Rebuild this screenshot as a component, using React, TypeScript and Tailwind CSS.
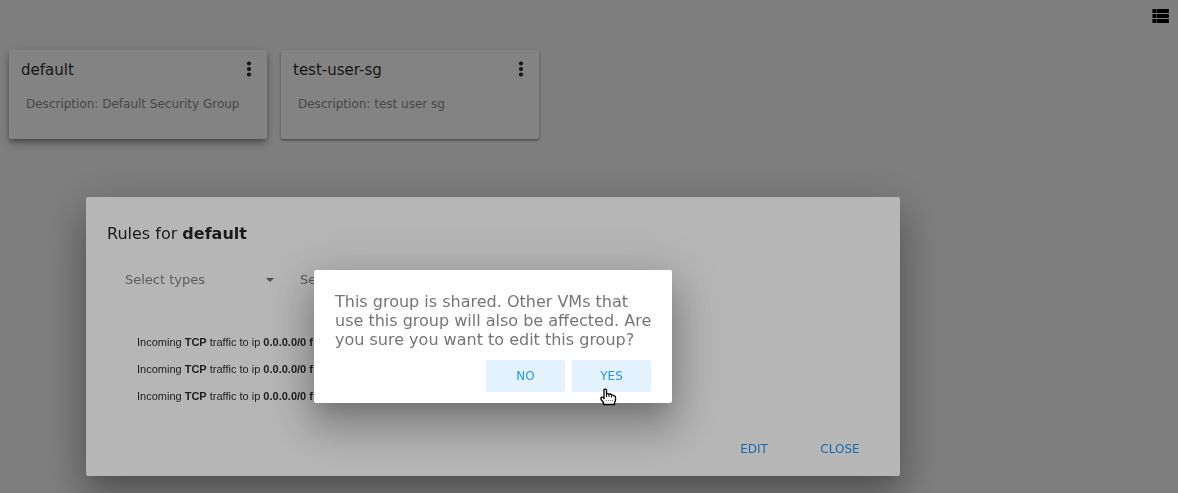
import React from "react";

type Group = { name: string; description: string; raised?: boolean };

const groups: Group[] = [
  { name: "default", description: "Default Security Group", raised: true },
  { name: "test-user-sg", description: "test user sg" },
];

const rules = [
  { id: 1, protocol: "TCP", ip: "0.0.0.0/0" },
  { id: 2, protocol: "TCP", ip: "0.0.0.0/0" },
  { id: 3, protocol: "TCP", ip: "0.0.0.0/0" },
];

const raisedShadow =
  "shadow-[0_6px_10px_0_rgba(0,0,0,0.16),0_1px_12px_0_rgba(0,0,0,0.1),0_3px_5px_-1px_rgba(0,0,0,0.3)]";
const flatShadow =
  "shadow-[0_2px_2px_0_rgba(0,0,0,0.14),0_1px_2px_0_rgba(0,0,0,0.25),0_1px_5px_0_rgba(0,0,0,0.12)]";

function GroupCard({ name, description, raised }: Group) {
  return (
    <article
      className={`w-[258px] rounded-xs bg-[#838383] px-3 pt-[9px] pb-[27px] ${raised ? raisedShadow : flatShadow}`}
    >
      <header className="flex items-center justify-between">
        <h2 className="text-[15px] leading-[22px] text-[#161616]">{name}</h2>
        <button type="button" aria-label={`Actions for ${name}`} className="flex h-[22px] w-3 justify-center pt-0.5">
          <svg viewBox="0 0 6 16" className="h-4 w-1.5" fill="#161616" aria-hidden="true">
            <circle cx="3" cy="2.5" r="2.1" />
            <circle cx="3" cy="8" r="2.1" />
            <circle cx="3" cy="13.5" r="2.1" />
          </svg>
        </button>
      </header>
      <p className="mt-[15px] px-[5px] text-xs text-[#474747]">Description: {description}</p>
    </article>
  );
}

function FilterSelect({ label }: { label: string }) {
  return (
    <div className="relative flex w-[150px] items-center">
      <select
        aria-label={label}
        className="w-full appearance-none bg-transparent text-[13px] leading-5 text-[#5c5c5c]"
      >
        <option>{label}</option>
      </select>
      <svg viewBox="0 0 8 4" className="pointer-events-none absolute right-px h-1 w-2" fill="#4f4f4f" aria-hidden="true">
        <path d="M0 0h8L4 4z" />
      </svg>
    </div>
  );
}

function HandPointer() {
  return (
    <svg
      viewBox="0 0 17 18"
      className="pointer-events-none absolute top-7 left-7 h-[18px] w-[17px]"
      aria-hidden="true"
    >
      <path
        d="M4 1.5Q5.5 .5 6.5 2V6Q8 5 9 6.3Q10.500 5.500 11.500 7Q13 6.300 14 8Q15.500 7.800 15.500 9.500V12.500L14.500 14.500V16.500H3.500V14.500L1 11.500V9.500Q2.500 8.500 4 10.500Z"
        fill="#fff"
        stroke="#000"
        strokeWidth="1.3"
        strokeLinejoin="round"
      />
      <path d="M6.500 6V9M9 6.500V9M11.500 7.500V9.500" stroke="#000" fill="none" />
      <path d="M6 12.500h1M8 12.500h1M10 12.500h1M12 12.500h1" stroke="#777" fill="none" />
    </svg>
  );
}

const overlay = "fixed inset-0 flex items-center justify-center pt-[180px] pr-48";
const dialogShadow =
  "shadow-[0_9px_46px_8px_rgba(0,0,0,0.14),0_11px_15px_-7px_rgba(0,0,0,0.12),0_24px_38px_3px_rgba(0,0,0,0.2)]";

export default function App() {
  return (
    <div className="min-h-screen overflow-hidden bg-[#7f7f7f] font-['DejaVu_Sans',sans-serif]">
      <header className="flex h-[50px] justify-end pt-[9px] pr-[9px]">
        <button type="button" aria-label="List view" className="h-[14px] w-[17px]">
          <svg viewBox="0 0 17 14" className="h-[14px] w-[17px]" fill="#000" aria-hidden="true">
            <path d="M.4 0h4v4h-4zM4.900 0h12v4h-12zM.4 5h4v4h-4zM4.900 5h12v4h-12zM.4 10h4v4h-4zM4.900 10h12v4h-12z" />
          </svg>
        </button>
      </header>
      <main className="flex flex-wrap gap-[14px] px-[9px]">
        {groups.map((group) => (
          <GroupCard key={group.name} {...group} />
        ))}
      </main>

      <div className={overlay}>
        <section
          role="dialog"
          aria-labelledby="rules-title"
          className={`w-full max-w-[814px] rounded-xs bg-[#b6b6b6] px-[21px] pt-[25px] pb-[11px] ${dialogShadow}`}
        >
          <h1 id="rules-title" className="text-base leading-6 text-[#1a1a1a]">
            Rules for <b>default</b>
          </h1>
          <div className="mt-6 flex gap-[25px] px-[18px]">
            <FilterSelect label="Select types" />
            <FilterSelect label="Select protocols" />
          </div>
          <ul className="mt-[39px] px-[30px] font-['Liberation_Sans',Arial,sans-serif] text-[11px] leading-[27px] text-[#202020]">
            {rules.map((rule) => (
              <li key={rule.id}>
                Incoming <b>{rule.protocol}</b> traffic to ip <b>{rule.ip} f</b>
              </li>
            ))}
          </ul>
          <footer className="mt-[23px] flex justify-end gap-2 text-xs text-[#1a69ab]">
            <button type="button" className="h-8 w-[78px]">EDIT</button>
            <button type="button" className="h-8 w-[78px]">CLOSE</button>
          </footer>
        </section>
      </div>

      <div className={overlay}>
        <section
          role="alertdialog"
          aria-labelledby="confirm-text"
          className={`w-[358px] rounded-xs bg-white pt-[22px] pb-[11px] ${dialogShadow}`}
        >
          <p id="confirm-text" className="pr-4 pl-[21px] text-base leading-[19px] text-[#757575]">
            This group is shared. Other VMs that use this group will also be affected. Are you sure you want to edit
            this group?
          </p>
          <footer className="mt-[11px] flex justify-end gap-[7px] px-[21px] text-xs text-[#2196f3]">
            <button type="button" className="h-8 w-[79px] rounded-xs bg-[#e4f2fd]">NO</button>
            <div className="relative">
              <button type="button" className="h-8 w-[79px] rounded-xs bg-[#e4f2fd]">YES</button>
              <HandPointer />
            </div>
          </footer>
        </section>
      </div>
    </div>
  );
}
